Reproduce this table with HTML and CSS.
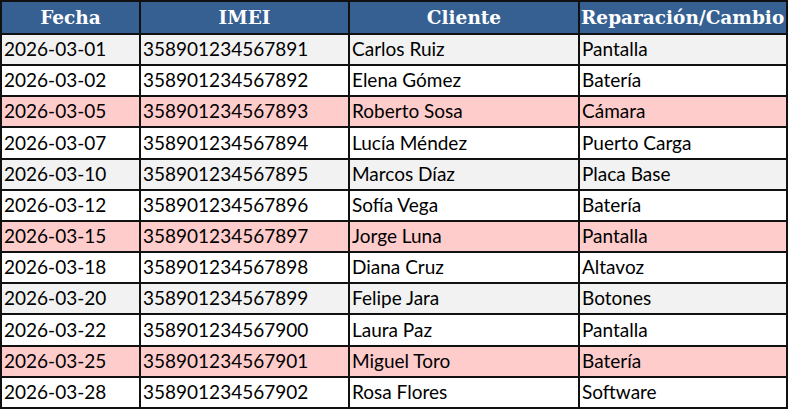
FILE: index.html
```html
<!DOCTYPE html>
<html lang="es">
<head>
<meta charset="utf-8">
<title>Reparaciones</title>
<link rel="stylesheet" href="styles.css">
</head>
<body>
<div class="sheet">
  <div class="cell head">Fecha</div>
  <div class="cell head">IMEI</div>
  <div class="cell head">Cliente</div>
  <div class="cell head wide">Reparación/Cambio</div>

  <div class="cell gray">2026-03-01</div><div class="cell gray">358901234567891</div><div class="cell gray">Carlos Ruiz</div><div class="cell gray">Pantalla</div>
  <div class="cell">2026-03-02</div><div class="cell">358901234567892</div><div class="cell">Elena Gómez</div><div class="cell">Batería</div>
  <div class="cell pink">2026-03-05</div><div class="cell pink">358901234567893</div><div class="cell pink">Roberto Sosa</div><div class="cell pink">Cámara</div>
  <div class="cell">2026-03-07</div><div class="cell">358901234567894</div><div class="cell">Lucía Méndez</div><div class="cell">Puerto Carga</div>
  <div class="cell gray">2026-03-10</div><div class="cell gray">358901234567895</div><div class="cell gray">Marcos Díaz</div><div class="cell gray">Placa Base</div>
  <div class="cell">2026-03-12</div><div class="cell">358901234567896</div><div class="cell">Sofía Vega</div><div class="cell">Batería</div>
  <div class="cell pink">2026-03-15</div><div class="cell pink">358901234567897</div><div class="cell pink">Jorge Luna</div><div class="cell pink">Pantalla</div>
  <div class="cell">2026-03-18</div><div class="cell">358901234567898</div><div class="cell">Diana Cruz</div><div class="cell">Altavoz</div>
  <div class="cell gray">2026-03-20</div><div class="cell gray">358901234567899</div><div class="cell gray">Felipe Jara</div><div class="cell gray">Botones</div>
  <div class="cell">2026-03-22</div><div class="cell">358901234567900</div><div class="cell">Laura Paz</div><div class="cell">Pantalla</div>
  <div class="cell pink">2026-03-25</div><div class="cell pink">358901234567901</div><div class="cell pink">Miguel Toro</div><div class="cell pink">Batería</div>
  <div class="cell">2026-03-28</div><div class="cell">358901234567902</div><div class="cell">Rosa Flores</div><div class="cell">Software</div>
</div>
</body>
</html>
```
FILE: styles.css
```css
html, body {
  margin: 0;
  padding: 0;
  background: #ffffff;
}
.sheet {
  box-sizing: border-box;
  width: 788px;
  height: 409px;
  display: grid;
  grid-template-columns: 137px 207px 228px 206px;
  grid-template-rows: 31px repeat(12, 1fr);
  gap: 2px;
  padding: 2px;
  background: #111111;
  font-family: "Lato", "Liberation Sans", sans-serif;
  font-size: 19px;
  color: #000000;
}
.cell {
  background: #ffffff;
  display: flex;
  align-items: center;
  padding: 0 0 2px 2px;
  white-space: nowrap;
  overflow: hidden;
}
.gray { background: #f2f2f2; }
.pink { background: #ffcccc; }
.head {
  background: #366092;
  color: #ffffff;
  font-family: "DejaVu Serif", "Liberation Serif", serif;
  font-weight: bold;
  font-size: 18.5px;
  justify-content: center;
  padding: 0 0 1px 0;
}
.head.wide {
  justify-content: flex-start;
  padding-left: 1px;
}
```
